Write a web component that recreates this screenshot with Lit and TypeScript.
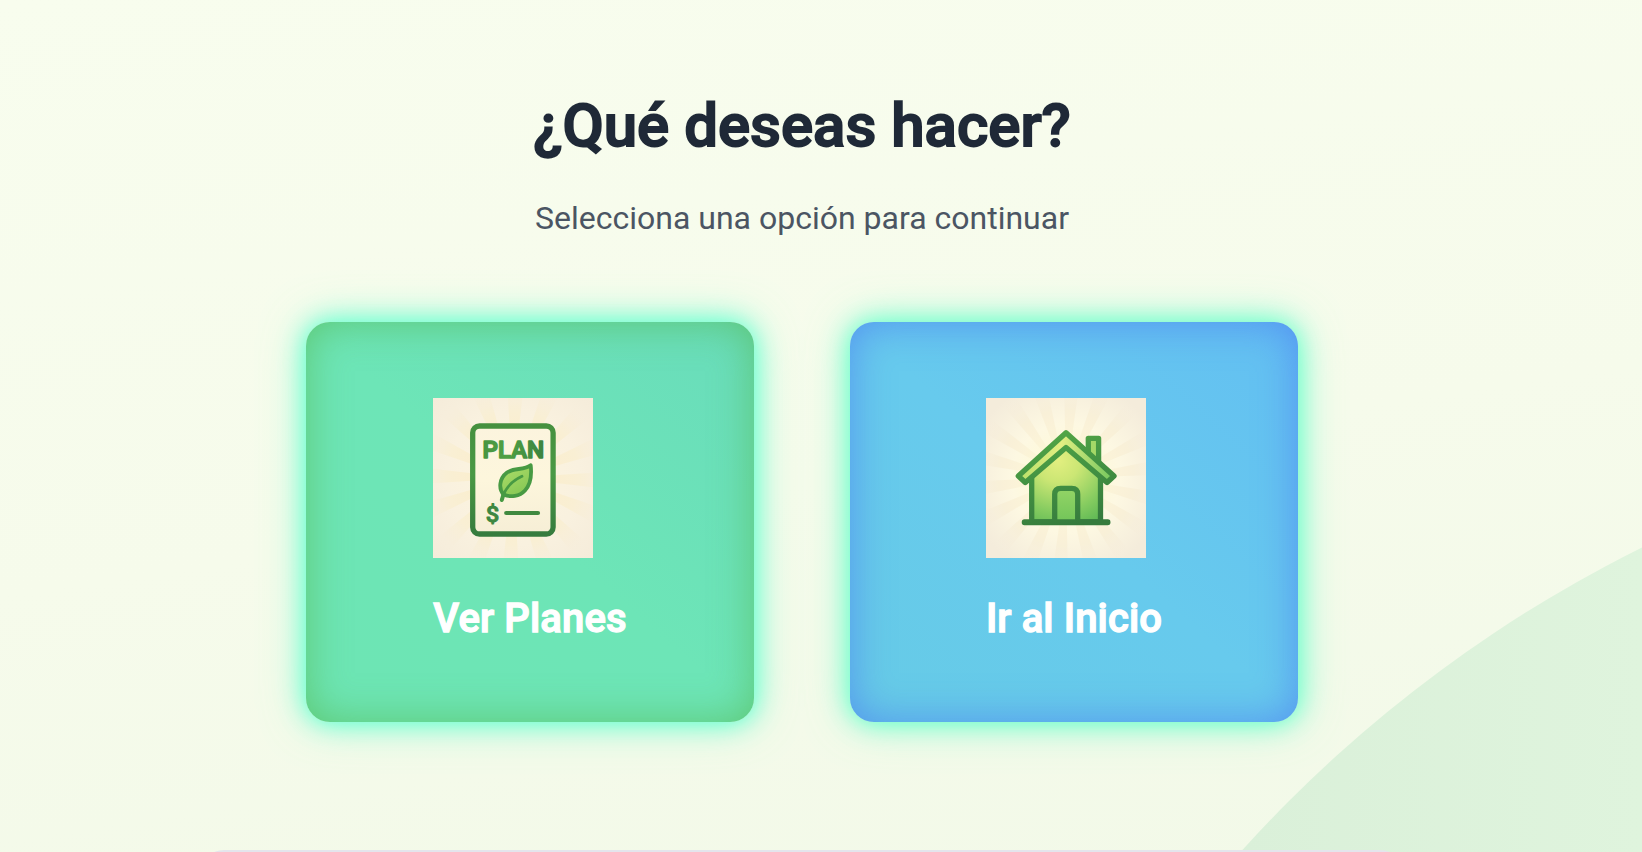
import { LitElement, html, svg, css } from "lit";
import { customElement, property } from "lit/decorators.js";

const rays = (cx: number, cy: number, middle: number, count: number, share: number) =>
  Array.from({ length: count }, (_, i) => {
    const mid = ((middle + (i * 360) / count) * Math.PI) / 180;
    const half = (Math.PI / count) * share;
    const p = (t: number) => `${(cx + 150 * Math.cos(t)).toFixed(1)} ${(cy + 150 * Math.sin(t)).toFixed(1)}`;
    return svg`<path d="M${cx} ${cy}L${p(mid - half)}L${p(mid + half)}Z"/>`;
  });

const planPicture = () => html`<svg viewBox="0 0 160 160" width="160" height="160">
  <defs>
    <radialGradient id="pbg" cx="50%" cy="50%" r="70%">
      <stop offset="0" stop-color="#fdf5de"/><stop offset=".6" stop-color="#f9f1df"/><stop offset="1" stop-color="#f5ecda"/>
    </radialGradient>
    <radialGradient id="pray" gradientUnits="userSpaceOnUse" cx="80" cy="80" r="96">
      <stop offset=".4" stop-color="#fbeecb"/><stop offset=".7" stop-color="#f9efd2"/><stop offset="1" stop-color="#f6ecda" stop-opacity="0"/>
    </radialGradient>
    <linearGradient id="pfill" x1="0" y1="0" x2="0" y2="1">
      <stop offset="0" stop-color="#fcf4de"/><stop offset=".5" stop-color="#fdf6dc"/><stop offset="1" stop-color="#f6eed6"/>
    </linearGradient>
    <linearGradient id="pink" gradientUnits="userSpaceOnUse" x1="0" y1="25" x2="0" y2="139">
      <stop offset="0" stop-color="#45903f"/><stop offset=".45" stop-color="#4a9945"/><stop offset="1" stop-color="#357a3e"/>
    </linearGradient>
    <linearGradient id="pword" gradientUnits="userSpaceOnUse" x1="50" y1="0" x2="110" y2="0">
      <stop offset="0" stop-color="#479541"/><stop offset=".4" stop-color="#50a043"/><stop offset="1" stop-color="#3c8441"/>
    </linearGradient>
    <linearGradient id="pleaf" x1=".2" y1="0" x2=".8" y2="1">
      <stop offset="0" stop-color="#acdc68"/><stop offset="1" stop-color="#83c653"/>
    </linearGradient>
  </defs>
  <rect width="160" height="160" fill="url(#pbg)"/>
  <g fill="url(#pray)" opacity=".8">${rays(80, 80, -88.5, 16, 0.46)}</g>
  <rect x="39.7" y="28" width="80.4" height="108" rx="6.8" fill="url(#pfill)" stroke="url(#pink)" stroke-width="5.3"/>
  <text x="49.600" y="59.700" class="word" textLength="61.500" lengthAdjust="spacing" fill="url(#pword)" stroke="url(#pword)" stroke-width="1.600" stroke-linejoin="round">PLAN</text>
  <path d="M97.700 67.200C91 72.500 81 69.500 74 74.500C66 80.500 65.500 91 70.500 96.500C77.500 99.500 86.500 98.500 92 92.500C98.500 85.500 98.800 77 97.700 67.200Z" fill="url(#pleaf)" stroke="#489a43" stroke-width="3.800" stroke-linejoin="round"/>
  <path d="M89 78.300C79 83 71.300 90.500 68.700 102.200" fill="none" stroke="#489a43" stroke-width="2.800" stroke-linecap="round"/>
  <path d="M70.600 96L68.800 102" fill="none" stroke="#489a43" stroke-width="4" stroke-linecap="round"/>
  <text x="52.700" y="124.300" class="money" textLength="13.500" lengthAdjust="spacingAndGlyphs" fill="#3d8741" stroke="#3d8741" stroke-width=".9" stroke-linejoin="round">$</text>
  <path d="M73.200 115H105" stroke="#40893f" stroke-width="4.200" stroke-linecap="round"/>
</svg>`;

const housePicture = () => html`<svg viewBox="0 0 160 160" width="160" height="160">
  <defs>
    <radialGradient id="hbg" cx="50%" cy="50%" r="62%">
      <stop offset="0" stop-color="#fffbd0"/><stop offset=".55" stop-color="#fdf8e2"/><stop offset="1" stop-color="#f4ecdb"/>
    </radialGradient>
    <radialGradient id="hray" gradientUnits="userSpaceOnUse" cx="80" cy="80" r="96">
      <stop offset=".35" stop-color="#faf0ce" stop-opacity=".6"/><stop offset=".7" stop-color="#f8eed4"/><stop offset="1" stop-color="#f4ebdb" stop-opacity="0"/>
    </radialGradient>
    <linearGradient id="hink" gradientUnits="userSpaceOnUse" x1="70" y1="35" x2="95" y2="125">
      <stop offset="0" stop-color="#52a546"/><stop offset=".4" stop-color="#449443"/><stop offset="1" stop-color="#367b3d"/>
    </linearGradient>
    <radialGradient id="hwall" gradientUnits="userSpaceOnUse" cx="72" cy="62" r="74">
      <stop offset="0" stop-color="#e3ef80"/><stop offset=".3" stop-color="#cbe674"/><stop offset=".7" stop-color="#86cc60"/><stop offset="1" stop-color="#59b653"/>
    </radialGradient>
    <linearGradient id="hdoor" x1="0" y1="0" x2="0" y2="1">
      <stop offset="0" stop-color="#93d466"/><stop offset="1" stop-color="#72c559"/>
    </linearGradient>
    <linearGradient id="hroof" gradientUnits="userSpaceOnUse" x1="32" y1="0" x2="128" y2="0">
      <stop offset="0" stop-color="#b7df68"/><stop offset=".45" stop-color="#e3ee82"/><stop offset="1" stop-color="#70c65c"/>
    </linearGradient>
  </defs>
  <rect width="160" height="160" fill="url(#hbg)"/>
  <g fill="url(#hray)" opacity=".65">${rays(80, 80, -86.5, 18, 0.46)}</g>
  <g stroke="url(#hink)" stroke-width="5.300" stroke-linejoin="round" stroke-linecap="round">
    <path d="M102.300 56V40.300H112.600V66Z" fill="#a4d867"/>
    <path d="M45.700 76L80 46L114.500 76V124H45.700Z" fill="url(#hwall)"/>
    <path d="M68.700 124V96.300Q68.700 90.300 74.700 90.300H85.700Q91.700 90.300 91.700 96.300V124" fill="url(#hdoor)"/>
    <path d="M80 34.800L128 78L121 84.500L80 49.500L39.300 84.500L32.300 78Z" fill="url(#hroof)"/>
    <rect x="38.400" y="123.900" width="83.400" height=".6"/>
  </g>
</svg>`;

@customElement("option-card")
class OptionCard extends LitElement {
  @property() label = "";
  @property() kind: "plan" | "home" = "plan";

  static styles = css`
    :host { display: block; }
    .card {
      box-sizing: border-box; width: 448px; height: 400px; border-radius: 24px;
      display: flex; align-items: center; justify-content: center;
      color: #fff; font: 500 40px/48px Roboto, sans-serif;
      border: 0; padding: 0; cursor: pointer;
    }
    .plan {
      background: linear-gradient(to top right, #6de5b3, #6de5b7 50%, #69dcbb);
      box-shadow: 0 0 24px #5fffd0, 0 0 44px rgba(110, 255, 205, .7), inset 0 0 40px rgba(84, 180, 70, .6);
    }
    .home {
      background: linear-gradient(to top right, #66cbe6, #67caed 50%, #63bff2);
      box-shadow: 0 0 24px #66ffca, 0 0 44px rgba(110, 255, 205, .7), inset 0 0 40px rgba(74, 120, 242, .66);
    }
    .stack {
      display: flex; flex-direction: column; align-items: flex-start;
      gap: 37px; padding-bottom: 3px; text-align: left;
    }
    .label { -webkit-text-stroke: 1.300px #fff; letter-spacing: .13px; }
    .word { font: 500 24.200px Roboto, sans-serif; }
    .money { font: 500 22.500px Roboto, sans-serif; }
    svg { display: block; }
  `;

  render() {
    return html`<button class="card ${this.kind}">
      <span class="stack">
        ${this.kind === "plan" ? planPicture() : housePicture()}
        <span class="label">${this.label}</span>
      </span>
    </button>`;
  }
}

@customElement("app-root")
class AppRoot extends LitElement {
  static styles = css`
    :host {
      display: block; position: relative; width: 1642px; height: 852px; overflow: hidden;
      font-family: Roboto, sans-serif;
      background: linear-gradient(172deg, #f8fdee 0%, #f6fbeb 55%, #f2f9e8 100%);
    }
    .hill { position: absolute; inset: 0; }
    .page {
      position: relative; box-sizing: border-box; width: 1604px; height: 852px;
      display: flex; flex-direction: column; align-items: center; padding-top: 96px;
    }
    h1 {
      margin: 0; font-size: 60px; line-height: 60px; font-weight: 500;
      color: #1f2937; -webkit-text-stroke: 1.800px #1f2937;
    }
    p { margin: 42px 0 0; font-size: 32px; line-height: 40px; color: #4b5563; }
    .options { display: flex; gap: 96px; margin-top: 84px; }
    .panel {
      flex: none; margin-top: 128px; width: 1204px; height: 48px;
      border-radius: 24px; background: #e4e5ec;
    }
  `;

  render() {
    return html`
      <svg class="hill" viewBox="0 0 1642 852" width="1642" height="852">
        <defs>
          <linearGradient id="hg" x1="1242" y1="0" x2="1642" y2="0" gradientUnits="userSpaceOnUse">
            <stop offset="0" stop-color="#daf0d9"/><stop offset="1" stop-color="#dff4dd"/>
          </linearGradient>
        </defs>
        <circle cx="2239" cy="1751" r="1343.500" fill="url(#hg)"/>
      </svg>
      <main class="page">
        <h1>¿Qué deseas hacer?</h1>
        <p>Selecciona una opción para continuar</p>
        <div class="options">
          <option-card kind="plan" label="Ver Planes"></option-card>
          <option-card kind="home" label="Ir al Inicio"></option-card>
        </div>
        <div class="panel"></div>
      </main>
    `;
  }
}
